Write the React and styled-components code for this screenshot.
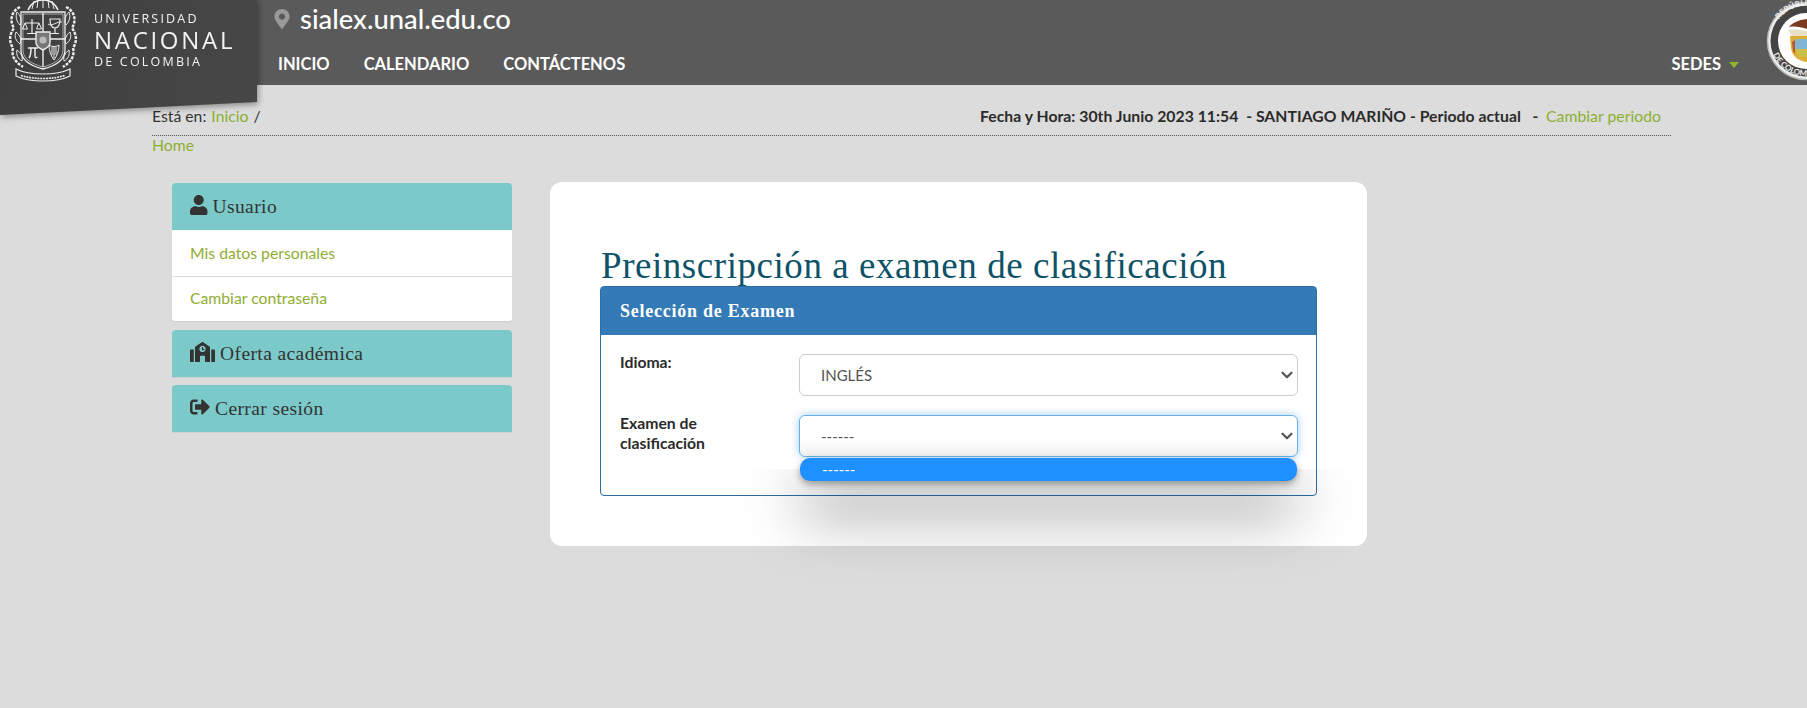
import React from "react";
import styled, { createGlobalStyle } from "styled-components";
import { FaUser, FaSchool, FaSignOutAlt, FaMapMarkerAlt } from "react-icons/fa";
import { LuChevronDown } from "react-icons/lu";

const SANS = `"Lato", "Open Sans", sans-serif`;
const SERIF = `"Liberation Serif", "DejaVu Serif", serif`;

const GlobalStyle = createGlobalStyle`
  html, body {
    margin: 0;
    height: 100%;
    background: #dcdcdc;
    overflow: hidden;
  }
  body {
    font-family: ${SANS};
    font-size: 15.75px;
    color: #333;
  }
  * { box-sizing: border-box; }
`;

const Header = styled.header`
  display: flex;
  height: 85px;
  background: #5a5a5a;
  color: #fff;
  overflow: visible;
`;

const LogoPanel = styled.div`
  flex: 0 0 257px;
  height: 117px;
  filter: drop-shadow(1px 2px 3px rgba(0, 0, 0, 0.4));
  position: relative;
  z-index: 2;
`;

const LogoShape = styled.div`
  display: flex;
  height: 100%;
  padding-left: 8px;
  gap: 16px;
  background: linear-gradient(100deg, #3e3e3e, #474747);
  clip-path: polygon(0 0, 100% 0, 100% 102px, 0 115px);
`;

const LogoText = styled.div`
  display: flex;
  flex-direction: column;
  padding-top: 11px;
  font-family: "Open Sans", sans-serif;
  color: #f2f2f2;
`;

const LogoSmall = styled.span`
  font-size: 12.5px;
  line-height: 15px;
  letter-spacing: 2.2px;
  white-space: nowrap;
`;

const LogoBig = styled.span`
  font-size: 24px;
  line-height: 28px;
  letter-spacing: 2.7px;
  white-space: nowrap;
`;

const HeaderMain = styled.div`
  flex: 1;
  display: flex;
  flex-direction: column;
  padding-left: 21px;
`;

const SiteRow = styled.div`
  flex: none;
  display: flex;
  align-items: center;
  height: 37px;
  gap: 8px;
  font-size: 27.4px;
  font-weight: 500;
  color: #fff;

  svg {
    color: #999;
    font-size: 20px;
    margin-left: -6px;
  }
`;

const NavRow = styled.nav`
  flex: none;
  display: flex;
  align-items: center;
  height: 48px;
  padding-top: 6px;
  font-size: 16.5px;
  font-weight: 700;
`;

const NavItem = styled.a`
  margin-right: 34px;
  white-space: nowrap;
`;

const Sedes = styled.a`
  display: flex;
  align-items: center;
  gap: 8px;
  margin: 0 27px 0 auto;
  font-size: 16.5px;
  font-weight: 700;

  &::after {
    content: "";
    border-left: 5px solid transparent;
    border-right: 5px solid transparent;
    border-top: 6px solid #8fb52e;
    margin-top: 2px;
  }
`;

const Seal = styled.svg`
  flex: 0 0 41px;
  width: 41px;
  height: 85px;
  display: block;
`;

const Content = styled.main`
  width: 1519px;
  margin-left: 152px;
`;

const Breadcrumb = styled.div`
  display: flex;
  justify-content: space-between;
  height: 51px;
  padding: 22px 10px 0 0;
  line-height: 18px;
  border-bottom: 1px dotted #555;
`;

const Crumbs = styled.div`
  display: flex;
  gap: 5px;
`;

const Link = styled.a`
  color: #8cb031;
`;

const Status = styled.div`
  font-weight: 700;
  letter-spacing: 0.03px;
  color: #2b2b2b;
  white-space: pre;

  ${Link} {
    font-weight: 400;
  }
`;

const HomeLink = styled(Link)`
  display: block;
  line-height: 20px;
  margin-top: -1px;
`;

const Columns = styled.div`
  display: flex;
  align-items: flex-start;
  gap: 38px;
  margin: 27px 0 0 20px;
`;

const Sidebar = styled.aside`
  flex: 0 0 340px;
  display: flex;
  flex-direction: column;
  gap: 8px;
  margin-top: 1px;
`;

const MenuBlock = styled.section`
  border-radius: ${(p) => (p.$open ? "4px 4px 3px 3px" : "4px 4px 0 0")};
  margin-bottom: ${(p) => (p.$open ? "1px" : "0")};
  box-shadow: 0 1px 1px rgba(0, 0, 0, 0.06);
  overflow: hidden;
`;

const MenuTitle = styled.h3`
  display: flex;
  align-items: center;
  gap: 5px;
  height: 47px;
  margin: 0;
  padding: 0 18px;
  background: #7bc9c9;
  font-family: ${SERIF};
  font-size: 19.5px;
  font-weight: 400;
  letter-spacing: 0.4px;
  color: #333;

  svg {
    flex: none;
    margin-bottom: 3px;
  }
`;

const UserIcon = styled(FaUser)`
  width: 17.5px;
  height: 20px;
`;

const SchoolIcon = styled(FaSchool)`
  width: 25px;
  height: 20px;
`;

const LogoutIcon = styled(FaSignOutAlt)`
  width: 20px;
  height: 20px;
`;

const MenuItem = styled.a`
  display: flex;
  align-items: center;
  height: 45px;
  padding: 0 18px 4px;
  background: #fff;
  color: #90ad33;
  border-top: 1px solid #ddd;

  &:first-of-type {
    border-top: none;
    height: 46px;
    padding-bottom: 1px;
  }
`;

const Card = styled.section`
  flex: 0 0 817px;
  height: 364px;
  padding: 62px 50px 0;
  background: #fff;
  border-radius: 12px;
`;

const Title = styled.h1`
  margin: 0 0 0 1px;
  height: 42px;
  font-family: ${SERIF};
  font-size: 37px;
  line-height: 44px;
  font-weight: 400;
  letter-spacing: 0.55px;
  color: #0e5268;
  white-space: nowrap;
`;

const Panel = styled.section`
  height: 210px;
  border: 1px solid #2e6da4;
  border-radius: 4px;
`;

const PanelHeading = styled.h3`
  display: flex;
  align-items: center;
  height: 48px;
  margin: 0;
  padding: 0 19px;
  background: #337ab7;
  font-family: ${SERIF};
  font-size: 18px;
  font-weight: 700;
  letter-spacing: 0.75px;
  color: #fff;
`;

const PanelBody = styled.div`
  display: grid;
  grid-template-columns: 179px 1fr;
  row-gap: 19px;
  padding: 19px 18px 0 19px;
`;

const FieldLabel = styled.label`
  font-weight: 700;
  line-height: 20px;
  color: #2b2b2b;
  max-width: 130px;
  margin-top: -2px;
`;

const SelectBox = styled.div`
  position: relative;
  height: 42px;

  svg {
    position: absolute;
    top: 12px;
    right: 2px;
    font-size: 18px;
    stroke-width: 3;
    color: #555;
    pointer-events: none;
  }
`;

const Select = styled.select`
  appearance: none;
  display: block;
  width: 100%;
  height: 100%;
  padding: 0 21px;
  font-family: ${SANS};
  font-size: 15px;
  color: #555;
  outline: none;
  border-radius: 6px;
  border: 1px solid ${(p) => (p.$focused ? "#66afe9" : "#ccc")};
  background: ${(p) =>
    p.$focused ? "linear-gradient(#fff 60%, #eee)" : "#fff"};
  box-shadow: ${(p) =>
    p.$focused ? "0 0 8px rgba(102, 175, 233, 0.6)" : "none"};
`;

const DropList = styled.ul`
  position: absolute;
  z-index: 1;
  top: 43px;
  left: 1px;
  right: 1px;
  height: 23px;
  margin: 0;
  padding: 0 22px;
  list-style: none;
  line-height: 22px;
  font-size: 15px;
  color: #fff;
  background: #1e90ff;
  border-radius: 10px;
  box-shadow: 0 3px 7px rgba(0, 0, 0, 0.35);

  &::before {
    content: "";
    position: absolute;
    inset: 0;
    border-radius: 10px;
    box-shadow: 0 30px 60px rgba(0, 0, 0, 0.55);
    clip-path: inset(11px -120px -120px -120px);
    z-index: -1;
  }
`;

const UnalCrest = () => (
  <svg width="70" height="84" viewBox="0 0 70 84" fill="none" stroke="#eee" strokeWidth="1" style={{ flex: "0 0 70px" }}>
    {/* ornamento superior */}
    <path d="M20 10c3-7 8-10 15-10s12 3 15 10" strokeWidth="1.6" />
    <path d="M24 9l2-8M29 8l1-8M35 8V0M41 8l-1-8M46 9l-2-8" />
    {/* escudo */}
    <path d="M13 12h44v38c0 10-10 16-22 19C23 66 13 60 13 50z" strokeWidth="1.3" />
    <path d="M15 14h40v36c0 9-9 14-20 17-11-3-20-8-20-17z" strokeWidth=".6" />
    <path d="M35 13v54M13 39h44" strokeWidth="1.4" />
    {/* hojas laterales */}
    <path d="M12 7C2 12 2 22 6 28c-5 7-5 14-1 20-2 8 2 14 10 19" strokeWidth="2.4" strokeDasharray="3 1.200" />
    <path d="M58 7c10 5 10 15 6 21 5 7 5 14 1 20 2 8-2 14-10 19" strokeWidth="2.4" strokeDasharray="3 1.200" />
    <path d="M9 12c-2 5 0 10 3 13 2-4 1-9-3-13zM8 32c-2 5 0 9 4 12 2-4 0-9-4-12zM9 50c-1 5 1 9 5 11 1-4-1-8-5-11z" />
    <path d="M61 12c2 5 0 10-3 13-2-4-1-9 3-13zM62 32c2 5 0 9-4 12-2-4 0-9 4-12zM61 50c1 5-1 9-5 11-1-4 1-8 5-11z" />
    {/* balanza */}
    <path d="M17 23h14M24 19v14M19 33.500h10" strokeWidth="1.200" />
    <path d="M17 23l-2.500 6h5zM31 23l-2.500 6h5z" />
    {/* copa */}
    <path d="M42 19h10c0 6-2 9-5 9s-5-3-5-9zM47 28v5M43 33.500h8" strokeWidth="1.200" />
    <path d="M40 24c4 3 9-3 14-2" />
    {/* medallon */}
    <path d="M28 32h14v11c0 3-3 5-7 7-4-2-7-4-7-7z" fill="#777" strokeWidth="1.400" />
    <circle cx="35" cy="40" r="3.500" fill="#bbb" stroke="none" />
    {/* pi */}
    <path d="M20 48h10M23 48c0 4-.5 8-2 10M27 48v8c0 2 1 2 2.500 1" strokeWidth="1.500" />
    {/* arpa */}
    <path d="M41 45c0 6 2 11 5 15 3-4 5-9 5-15-2 2-8 2-10 0zM44 47v8M46 47v11M48 47v8" />
    {/* cinta */}
    <path d="M8 69c8 4 16 5 27 5s19-1 27-5v7c-8 4-16 5-27 5s-19-1-27-5z" strokeWidth="1.200" />
    <path d="M13 75.500c7 2 14 3 22 3s15-1 22-3" strokeWidth="1.600" strokeDasharray="2 .8" />
  </svg>
);

const ColombiaSeal = () => (
  <Seal viewBox="0 0 41 85">
    <defs>
      <path id="sealTop" d="M6 40a34 34 0 0 1 68 0" />
      <path id="sealBottom" d="M4 40a36 36 0 0 0 72 0" />
    </defs>
    <circle cx="40" cy="41" r="38.500" fill="#eee" stroke="#bbb" strokeWidth="1.500" />
    <circle cx="40" cy="41" r="35.500" fill="#444" />
    <circle cx="40" cy="41" r="28" fill="#fff" />
    <text fontSize="8" fontWeight="700" fontFamily="Lato, sans-serif" fill="#eee">
      <textPath href="#sealTop" startOffset="22">REPÚBLICA</textPath>
    </text>
    <text fontSize="8" fontWeight="700" fontFamily="Lato, sans-serif" fill="#eee">
      <textPath href="#sealBottom" startOffset="15">DE COLOMBIA</textPath>
    </text>
    {/* condor y escudo */}
    <path d="M23 27c3-4 9-7 18-8v10c-6-2-12-3-18-2z" fill="#7a3b22" />
    <path d="M22 30c6-1 13 0 19 1v5H26z" fill="#e8e0c4" />
    <path d="M24 36h17v26c-9-1-15-6-16-14z" fill="#dcae35" />
    <path d="M29 39h12v10H29z" fill="#7fb5cf" />
    <path d="M30 49h11v8h-8z" fill="#c9c14a" />
    <path d="M26 42l3-2v14l-2-3z" fill="#b4572f" />
  </Seal>
);

const App = () => {
  return (
    <>
      <GlobalStyle />
      <Header>
        <LogoPanel>
          <LogoShape>
            <UnalCrest />
            <LogoText>
              <LogoSmall>UNIVERSIDAD</LogoSmall>
              <LogoBig>NACIONAL</LogoBig>
              <LogoSmall>DE COLOMBIA</LogoSmall>
            </LogoText>
          </LogoShape>
        </LogoPanel>
        <HeaderMain>
          <SiteRow>
            <FaMapMarkerAlt />
            <span>sialex.unal.edu.co</span>
          </SiteRow>
          <NavRow>
            <NavItem>INICIO</NavItem>
            <NavItem>CALENDARIO</NavItem>
            <NavItem>CONTÁCTENOS</NavItem>
            <Sedes>SEDES</Sedes>
          </NavRow>
        </HeaderMain>
        <ColombiaSeal />
      </Header>

      <Content>
        <Breadcrumb>
          <Crumbs>
            <span>Está en:</span>
            <Link>Inicio</Link>
            <span>/</span>
          </Crumbs>
          <Status>
            {"Fecha y Hora: 30th Junio 2023 11:54  - SANTIAGO MARIÑO - Periodo actual   -  "}
            <Link>Cambiar periodo</Link>
          </Status>
        </Breadcrumb>
        <HomeLink>Home</HomeLink>

        <Columns>
          <Sidebar>
            <MenuBlock $open>
              <MenuTitle>
                <UserIcon />
                Usuario
              </MenuTitle>
              <MenuItem>Mis datos personales</MenuItem>
              <MenuItem>Cambiar contraseña</MenuItem>
            </MenuBlock>
            <MenuBlock>
              <MenuTitle>
                <SchoolIcon />
                Oferta académica
              </MenuTitle>
            </MenuBlock>
            <MenuBlock>
              <MenuTitle>
                <LogoutIcon />
                Cerrar sesión
              </MenuTitle>
            </MenuBlock>
          </Sidebar>

          <Card>
            <Title>Preinscripción a examen de clasificación</Title>
            <Panel>
              <PanelHeading>Selección de Examen</PanelHeading>
              <PanelBody>
                <FieldLabel>Idioma:</FieldLabel>
                <SelectBox>
                  <Select defaultValue="ingles">
                    <option value="ingles">INGLÉS</option>
                  </Select>
                  <LuChevronDown />
                </SelectBox>
                <FieldLabel>Examen de clasificación</FieldLabel>
                <SelectBox>
                  <Select $focused defaultValue="none">
                    <option value="none">------</option>
                  </Select>
                  <LuChevronDown />
                  <DropList>
                    <li>------</li>
                  </DropList>
                </SelectBox>
              </PanelBody>
            </Panel>
          </Card>
        </Columns>
      </Content>
    </>
  );
};

export default App;
